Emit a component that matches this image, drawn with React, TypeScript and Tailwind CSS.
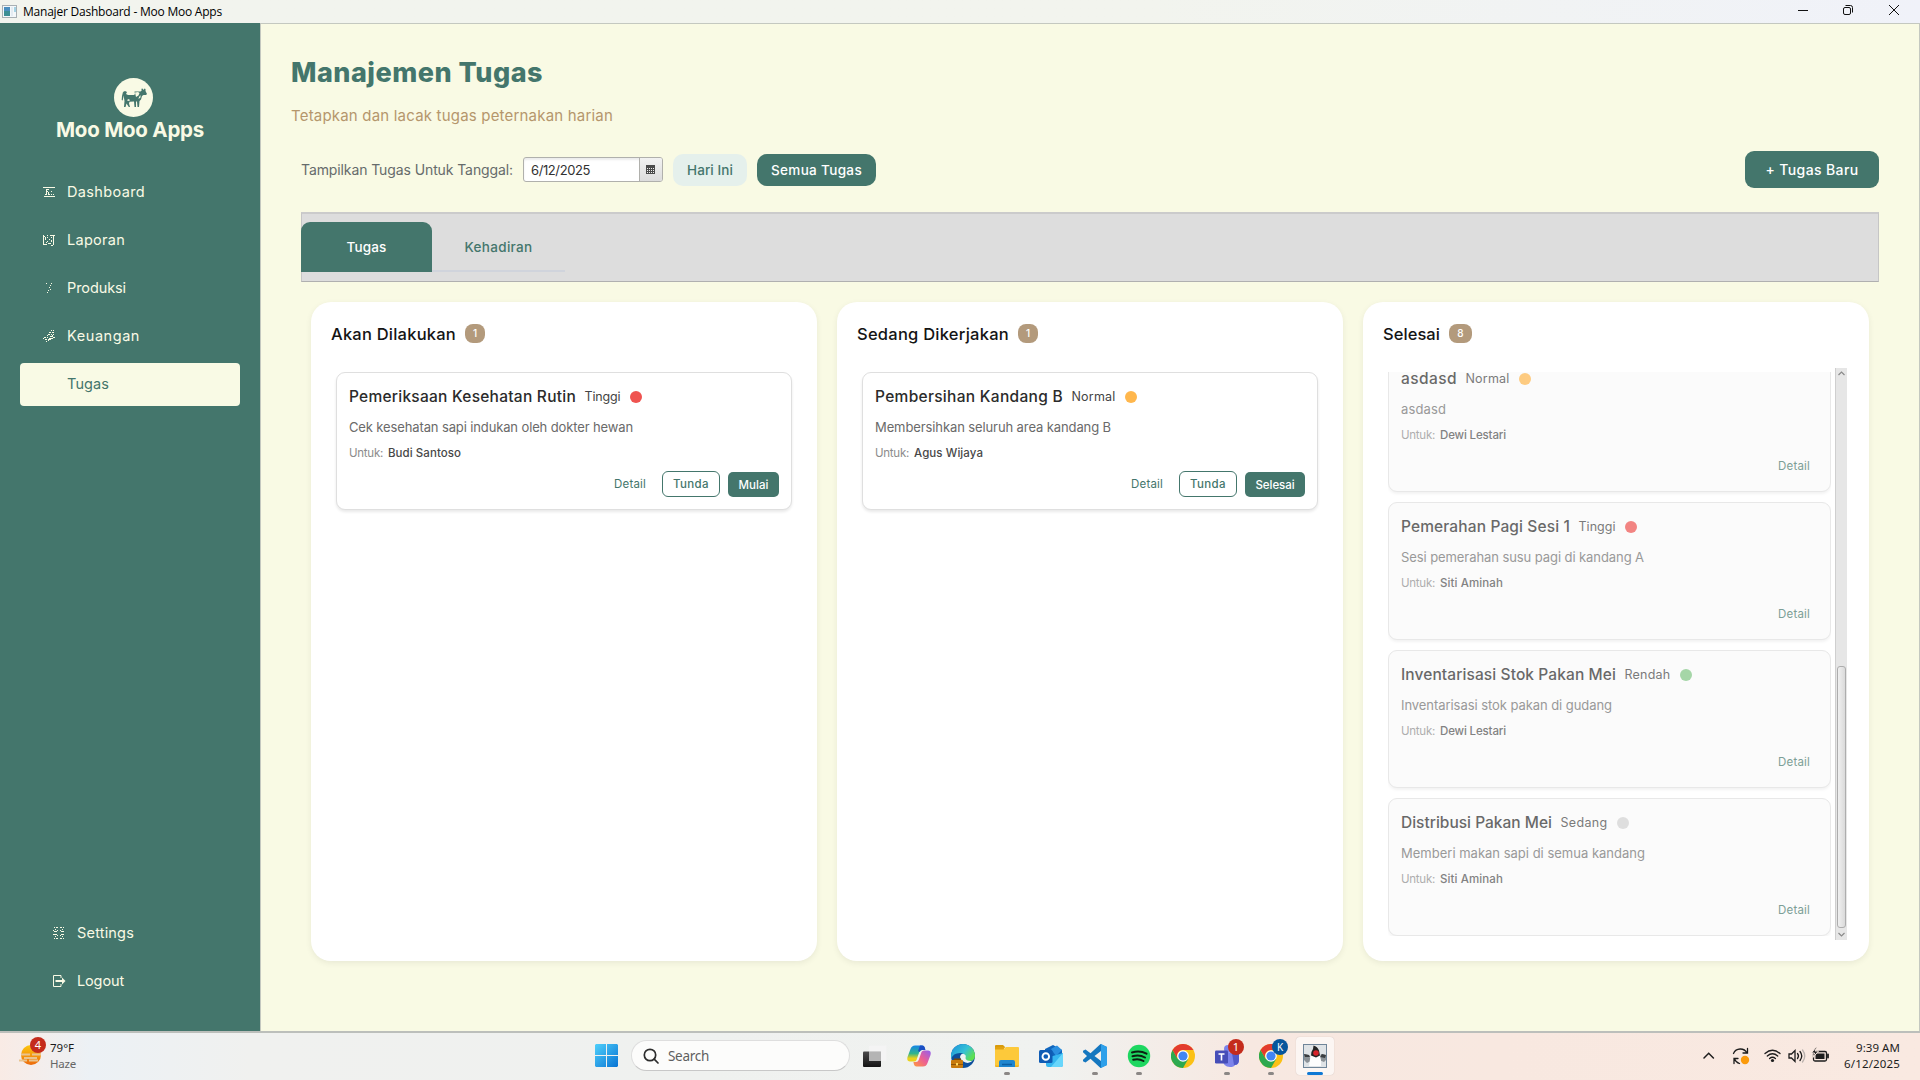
import { useLayoutEffect, useRef, useState, type ReactNode } from "react";

/* Single line of text whose tracking is adjusted so that it spans `w` pixels. */
function Line({ w, className = "", children }: { w: number; className?: string; children: string }) {
  const ref = useRef<HTMLSpanElement>(null);
  const [spacing, setSpacing] = useState(0);
  useLayoutEffect(() => {
    const range = document.createRange();
    range.selectNodeContents(ref.current!);
    const natural = range.getBoundingClientRect().width;
    setSpacing((w - natural) / children.length);
  }, [w, children]);
  return (
    <span
      ref={ref}
      className={"block shrink-0 whitespace-nowrap " + className}
      style={{ width: w, letterSpacing: spacing }}
    >
      {children}
    </span>
  );
}

function TitleBar() {
  return (
    <header className="flex h-[23px] shrink-0 items-center bg-gradient-to-r from-[#f2f4ee] from-60% to-[#f0f2f9] pl-[2px]">
      <svg width="16" height="16" viewBox="0 0 16 16">
        <rect x="0.5" y="1.5" width="14" height="12" fill="#f4f8fa" stroke="#a8b0b4" />
        <rect x="2" y="3" width="6" height="9" fill="#3c8f94" />
        <rect x="2" y="3" width="6" height="4" fill="#4a8fc0" />
        <rect x="9" y="3" width="2" height="9" fill="#e4ecf2" />
        <rect x="12" y="3" width="2" height="5" fill="#a6d3e4" />
      </svg>
      <Line w={199} className="ml-[5px] font-['Open_Sans',sans-serif] text-[12px] leading-none text-black">
        Manajer Dashboard - Moo Moo Apps
      </Line>
      <div className="mr-[2px] ml-auto flex h-full items-start">
        <svg width="46" height="20" viewBox="0 0 46 20" stroke="#111" fill="none">
          <path d="M18 10.5h10" />
        </svg>
        <svg width="46" height="20" viewBox="0 0 46 20" stroke="#111" fill="none">
          <rect x="17.500" y="7.500" width="7" height="7" rx="1.500" />
          <path d="M19.500 5.500h5q2 0 2 2v5" />
        </svg>
        <svg width="46" height="20" viewBox="0 0 46 20" stroke="#111" fill="none">
          <path d="M17 5l10 10M27 5l-10 10" />
        </svg>
      </div>
    </header>
  );
}

function CowLogo() {
  return (
    <svg width="39" height="39" viewBox="0 0 39 39" className="ml-[6px]">
      <circle cx="19.500" cy="19.500" r="19.500" fill="#f9fae5" />
      <g fill="#44766c">
        <path d="M9 14l2-1 2 1-1 2 2 1h6l1-1-.5-2.500h6l1.500-1.500-1-1 1.500-.5 1 1.500 1-1.500 1 .5v2l1.500 3-1 1h-2.500l-1.500 1-1 3.500-1.500 1.500-.5 6h-1.500l-.5-5.500h-1v5.500h-1.500l-.5-5.500-4.500.3-.5 1.700 1 3.500h-1.200l-2.300-3.500-1 3.500h-1.500l.5-6z" />
        <path d="M9 14l-1 4-.3 4 1 .5.800-4 1-2z" />
      </g>
      <path d="M21 14.500l3-.5 1.500 1-1 2.500-2.500 1.500zM25 19l1.500-2v2.500l-2 1.500zM13 22l2-1 1 1.500-2 .5z" fill="#f9fae5" />
    </svg>
  );
}

function PixelIcon({ d }: { d: string }) {
  return (
    <svg width="12" height="12" viewBox="0 0 12 12" className="shrink-0" fill="none" stroke="#f9fae5" shapeRendering="crispEdges">
      <path d={d} />
    </svg>
  );
}

const nav = [
  { label: "Dashboard", w: 78, d: "M0 1.500h12M1 10.500h11M3.500 3v6M4 3.500h2M4 5.500h1M5.500 6v2M2 8.500h1M5 8.500h2M8.500 5v1M8 8.500h1M10 8.500h1" },
  { label: "Laporan", w: 58, d: "M.5 1v10M1 10.500h3M1 2.500h1M2.500 3v3M4 3.500h1M4 1.500h1M4 7.500h1M3 8.500h1M5 9.500h3M8.500 6v2M7 1.500h5M10.500 2v9M8 11.500h2M8.500 3v1M6 5.500h1" },
  { label: "Produksi", w: 59, d: "M3 1.500h1M8 1.500h1M7 3.500h1M6 5.500h1M7 7.500h1M5 8.500h1M4 10.500h1" },
  { label: "Keuangan", w: 73, d: "M8 .5h1M10 .5h1M6 2.500h2M9 2.500h2M5 4.500h2M8 4.500h1M10 4.500h1M7 6.500h3M1 7.500h2M4 5.500h1M0 8.500h1M2 9.500h2M6 8.500h4M5 9.500h3M4 7.500h1M10 7.500h2M3 11.500h1M5 10.500h1M9 5.500h1" },
  { label: "Tugas", w: 42, d: "", active: true },
];

function Sidebar() {
  return (
    <aside className="flex w-[261px] shrink-0 flex-col border-r border-[#c4c8c0] bg-[#44766c] text-[#f9fae5]">
      <div className="flex flex-col items-center pt-[55px]">
        <CowLogo />
        <Line w={148} className="text-[20.500px] leading-[26px] font-bold">Moo Moo Apps</Line>
      </div>
      <nav className="mt-[28px] flex flex-col gap-[5px] px-5">
        {nav.map((n) => (
          <div
            key={n.label}
            className={
              "flex h-[43px] items-center gap-[12px] rounded-[4px] pb-[2px] pl-[23px] " +
              (n.active ? "bg-[#f9fae5] text-[#44766c]" : "text-[#f9fae5]")
            }
          >
            <PixelIcon d={n.d} />
            <Line w={n.w} className="text-[14.500px] leading-5">{n.label}</Line>
          </div>
        ))}
      </nav>
      <div className="mt-auto mb-[29px] flex flex-col gap-[5px] pl-[53px]">
        <div className="flex h-[43px] items-center gap-[12px]">
          <PixelIcon d="M1 .5h1M3 .5h2M7 .5h2M10 .5h1M.5 3v1M.5 7v1M2 2.500h1M4 3.500h1M7 3.500h1M9 2.500h1M1 4.500h3M8 4.500h3M1 7.500h3M8 7.500h3M4 8.500h1M7 8.500h1M2 9.500h1M9 9.500h1M1 11.500h1M3 11.500h2M7 11.500h2M10 11.500h1" />
          <Line w={57} className="text-[14.500px] leading-5">Settings</Line>
        </div>
        <div className="flex h-[43px] items-center gap-[12px]">
          <svg width="13" height="12" viewBox="0 0 13 12" className="-mr-px shrink-0" fill="none" stroke="#f9fae5">
            <path d="M8 3V.5H.5v11H8V9" />
            <path d="M2.500 6H9" strokeWidth="2" />
            <path d="M9 2.500L12.500 6 9 9.500z" fill="#f9fae5" stroke="none" />
          </svg>
          <Line w={47} className="text-[14.500px] leading-5">Logout</Line>
        </div>
      </div>
    </aside>
  );
}

function Toolbar() {
  return (
    <div className="mt-[23px] flex h-[37px] items-center">
      <Line w={212} className="text-[14px] leading-5 text-[#666b6b]">Tampilkan Tugas Untuk Tanggal:</Line>
      <div className="ml-[10px] flex h-[25px] w-[140px] overflow-hidden rounded-[3px] border border-[#b0b0ac] bg-white shadow-[inset_0_2px_2px_#ececec]">
        <div className="flex w-[115px] items-center pl-[7px]">
          <Line w={59} className="text-[13px] leading-5 text-[#323232]">6/12/2025</Line>
        </div>
        <div className="flex flex-1 items-center justify-center border-l border-[#b0b0ac] bg-gradient-to-b from-[#f2f2f2] to-[#dcdcdc]">
          <svg width="9" height="9" viewBox="0 0 9 9" className="-ml-px" shapeRendering="crispEdges">
            <rect width="9" height="9" fill="#4a4a4a" />
            <path d="M1 3.500h7M1 5.500h7M1 7.500h7" stroke="#eee" strokeDasharray="1 1" />
          </svg>
        </div>
      </div>
      <div className="ml-[10px] flex h-8 w-[74px] items-center justify-center rounded-[10px] bg-[#e5f0ec] text-[#44766c]">
        <Line w={46} className="text-[13.500px] leading-5 font-medium">Hari Ini</Line>
      </div>
      <div className="ml-[10px] flex h-8 w-[119px] items-center justify-center rounded-[10px] bg-[#44766c] text-white">
        <Line w={91} className="text-[13.500px] leading-5 font-medium">Semua Tugas</Line>
      </div>
      <div className="ml-auto flex h-[37px] w-[134px] items-center justify-center rounded-[9px] bg-[#44766c] text-white">
        <Line w={93} className="text-[14px] leading-5 font-medium">+ Tugas Baru</Line>
      </div>
    </div>
  );
}

function Tabs() {
  return (
    <div className="mt-6 flex h-[70px] items-start border-x border-t-2 border-b border-x-[#c6c6c6] border-t-[#cbcbcb] border-b-[#b0b0b0] bg-[#dddddd] pt-2">
      <div className="-ml-px flex h-[50px] w-[131px] items-center justify-center rounded-t-[9px] bg-[#44766c] text-white">
        <Line w={40} className="text-[13.500px] leading-5 font-medium">Tugas</Line>
      </div>
      <div className="flex h-[50px] w-[133px] items-center justify-center border-b-2 border-[#d0d4dc] pt-[2px] text-[#44766c]">
        <Line w={68} className="text-[13.500px] leading-5 font-medium">Kehadiran</Line>
      </div>
    </div>
  );
}

type Task = {
  title: string; tw: number; level: string; lw: number; dot: string;
  desc: string; dw: number; who: string; ww: number; action?: string; aw?: number;
};

function TaskCard({ t, done = false }: { t: Task; done?: boolean }) {
  return (
    <article
      className={
        "flex h-[138px] shrink-0 flex-col rounded-[9px] border px-3 pt-[12px] " +
        (done
          ? "border-[#e8e8e8] bg-[#fbfbfb] shadow-[0_2px_3px_rgba(0,0,0,0.05)]"
          : "border-[#dfdfdf] bg-white shadow-[0_2px_3px_rgba(0,0,0,0.09)]")
      }
    >
      <div className={"flex h-6 items-center " + (done ? "opacity-70" : "")}>
        <Line w={t.tw} className="text-[15.500px] leading-5 font-medium text-[#2b2b2b]">{t.title}</Line>
        <Line w={t.lw} className="ml-[8.500px] text-[12.500px] leading-5 text-[#444444]">{t.level}</Line>
        <span className="ml-[9px] size-3 rounded-full" style={{ backgroundColor: t.dot }} />
      </div>
      <Line w={t.dw} className={"mt-[7px] text-[13px] leading-[22px] " + (done ? "text-[#999999]" : "text-[#6a6a6a]")}>
        {t.desc}
      </Line>
      <div className="mt-[5px] flex h-5 items-center">
        <Line w={34} className={"text-[11.500px] leading-5 " + (done ? "text-[#aeaeae]" : "text-[#8c8c8c]")}>Untuk:</Line>
        <Line w={t.ww} className={"ml-[5px] text-[11.500px] leading-5 font-medium " + (done ? "text-[#828282]" : "text-[#484848]")}>
          {t.who}
        </Line>
      </div>
      <div className="mt-2 flex h-[26px] items-center justify-end">
        <Line w={32} className={"text-[11.500px] leading-5 " + (done ? "mr-2 text-[#7d9f97]" : "mr-4 text-[#44766c]")}>Detail</Line>
        {t.action && (
          <>
            <div className="flex h-[26px] w-[58px] items-center justify-center rounded-[6px] border border-[#44766c] text-[#44766c]">
              <Line w={36} className="text-[11.500px] leading-5 font-medium">Tunda</Line>
            </div>
            <div className="mt-px ml-2 flex h-[25px] items-center rounded-[5px] bg-[#44766c] px-[10.500px] text-white">
              <Line w={t.aw!} className="text-[11.500px] leading-5 font-medium">{t.action}</Line>
            </div>
          </>
        )}
      </div>
    </article>
  );
}

const doneTasks: Task[] = [
  { title: "asdasd", tw: 56, level: "Normal", lw: 44, dot: "#ffb74d", desc: "asdasd", dw: 45, who: "Dewi Lestari", ww: 66 },
  { title: "Pemerahan Pagi Sesi 1", tw: 169, level: "Tinggi", lw: 37, dot: "#ef5350", desc: "Sesi pemerahan susu pagi di kandang A", dw: 243, who: "Siti Aminah", ww: 63 },
  { title: "Inventarisasi Stok Pakan Mei", tw: 215, level: "Rendah", lw: 46, dot: "#81c784", desc: "Inventarisasi stok pakan di gudang", dw: 211, who: "Dewi Lestari", ww: 66 },
  { title: "Distribusi Pakan Mei", tw: 151, level: "Sedang", lw: 47, dot: "#d3d3d3", desc: "Memberi makan sapi di semua kandang", dw: 244, who: "Siti Aminah", ww: 63 },
];

function Column({ title, w, count, badge, children }: { title: string; w: number; count: string; badge: string; children: ReactNode }) {
  return (
    <section className="flex h-[659px] w-[506px] flex-col rounded-[20px] bg-white px-5 pt-5 shadow-[0_2px_6px_rgba(0,0,0,0.07)]">
      <div className="flex h-[23px] items-center">
        <Line w={w} className="text-[16.500px] leading-6 font-medium text-[#141414]">{title}</Line>
        <span className={"ml-[9px] flex h-[19px] items-center justify-center rounded-[8px] bg-[#b39a7c] text-[10px] font-medium text-white " + badge}>
          {count}
        </span>
      </div>
      {children}
    </section>
  );
}

function Board() {
  return (
    <div className="mx-[10px] mt-5 flex gap-5">
      <Column title="Akan Dilakukan" w={125} count="1" badge="w-5">
        <div className="mt-[27px] px-[5px]">
          <TaskCard t={{ title: "Pemeriksaan Kesehatan Rutin", tw: 227, level: "Tinggi", lw: 36, dot: "#ef5350", desc: "Cek kesehatan sapi indukan oleh dokter hewan", dw: 284, who: "Budi Santoso", ww: 73, action: "Mulai", aw: 30 }} />
        </div>
      </Column>
      <Column title="Sedang Dikerjakan" w={152} count="1" badge="w-5">
        <div className="mt-[27px] px-[5px]">
          <TaskCard t={{ title: "Pembersihan Kandang B", tw: 188, level: "Normal", lw: 44, dot: "#ffb74d", desc: "Membersihkan seluruh area kandang B", dw: 236, who: "Agus Wijaya", ww: 69, action: "Selesai", aw: 39 }} />
        </div>
      </Column>
      <Column title="Selesai" w={57} count="8" badge="w-[23px]">
        <div className="mt-[23px] flex h-[572px] pl-[5px]">
          <div className="my-1 flex h-[564px] w-[443px] flex-col justify-end gap-[10px] overflow-hidden">
            {doneTasks.map((t, i) => (
              <TaskCard key={i} t={t} done />
            ))}
          </div>
          <div className="ml-[4px] flex h-full w-3 flex-col items-center border-l border-[#cfcfcf] bg-[#e6e6e6]">
            <svg width="9" height="10" viewBox="0 0 9 10" fill="none" stroke="#8a8a8a" strokeWidth="1.200">
              <path d="M1.500 7l3-3 3 3" />
            </svg>
            <div className="mt-auto h-[262px] w-[9px] rounded-[3px] border border-[#adadad] bg-gradient-to-r from-[#f0f0f0] to-[#dadada]" />
            <svg width="9" height="12" viewBox="0 0 9 12" fill="none" stroke="#8a8a8a" strokeWidth="1.200">
              <path d="M1.500 5l3 3 3-3" />
            </svg>
          </div>
        </div>
      </Column>
    </div>
  );
}

function Chrome() {
  return (
    <svg width="24" height="24" viewBox="0 0 24 24">
      <circle cx="12" cy="12" r="12" fill="#fbc116" />
      <path d="M1.600 6A12 12 0 0 0 12 24l5.200-9L12 12 6.800 15z" fill="#2da94f" />
      <path d="M1.600 6A12 12 0 0 1 22.400 6H12a6 6 0 0 0-5.200 9z" fill="#e33b2e" />
      <circle cx="12" cy="12" r="5.800" fill="#fff" />
      <circle cx="12" cy="12" r="4.600" fill="#4285f4" />
    </svg>
  );
}

function AppSlot({ children, running = false, active = false, badge }: { children: ReactNode; running?: boolean; active?: boolean; badge?: ReactNode }) {
  return (
    <div className="flex w-11 justify-center">
      <div
        className={
          "relative flex h-[38px] w-[38px] flex-col items-center rounded-[4px] pt-[7px] " +
          (active ? "bg-white/60 shadow-[0_0_1px_rgba(0,0,0,0.25)]" : "")
        }
      >
        {children}
        {badge}
        {running && <span className="mt-[4px] h-[3px] w-[6px] rounded-full bg-[#8b8785]" />}
        {active && <span className="mt-[4px] h-[3px] w-4 shrink-0 rounded-full bg-[#0f78d4]" />}
      </div>
    </div>
  );
}

function Taskbar() {
  return (
    <footer className="flex h-[49px] shrink-0 items-center border-t-2 border-[#bcbfbb] bg-[linear-gradient(90deg,#f9ebe5_0px,#ecf1f5_90px,#f0f1ef_250px,#eff1ef_700px,#f0f2f0_1050px,#f7e8e1_1250px,#f8e8e0_1500px,#f9e9e1_1920px)] pb-[2px] font-['Noto_Sans',sans-serif]">
      <div className="relative ml-[19px] h-[38px] w-[27px]">
        <svg width="22" height="24" viewBox="0 0 22 24" className="mt-[6px]">
          <defs>
            <linearGradient id="sun" x1="0" y1="0" x2="0" y2="1">
              <stop offset="0" stopColor="#fdc80f" />
              <stop offset="1" stopColor="#ec6a0c" />
            </linearGradient>
          </defs>
          <circle cx="12" cy="12" r="10" fill="url(#sun)" />
          <path d="M2 11.500h9M13 11.500h9M5 15h13M0 17.500h8M10 17.500h9" stroke="#e9c48f" strokeWidth="1.800" />
        </svg>
        <span className="absolute top-0 left-[11px] flex size-4 items-center justify-center rounded-full bg-[#c42b1c] text-[11px] leading-none text-white">4</span>
      </div>
      <div className="ml-[4px] pt-[1px] text-[11.500px] leading-4 text-[#1a1a1a]">
        <Line w={24}>79°F</Line>
        <Line w={26} className="text-[#666666]">Haze</Line>
      </div>
      <svg width="23" height="23" viewBox="0 0 23 23" className="ml-[519px] shrink-0">
        <defs>
          <linearGradient id="win" x1="0" y1="0" x2="1" y2="1">
            <stop offset="0" stopColor="#4fd0fb" />
            <stop offset="1" stopColor="#0873d3" />
          </linearGradient>
        </defs>
        <path d="M1 0h10v11H0V1zM12 0h10l1 1v10H12zM0 12h11v11H1l-1-1zM12 12h11v10l-1 1H12z" fill="url(#win)" />
      </svg>
      <div className="ml-[13px] flex h-[31px] w-[219px] shrink-0 items-center rounded-full border border-b-[#c8c8c8] border-[#dedede] bg-[#fcfcfb] pl-[11px]">
        <svg width="16" height="16" viewBox="0 0 16 16" fill="none" stroke="#2d2d2d" strokeWidth="1.700" strokeLinecap="round">
          <circle cx="7" cy="7" r="5.700" />
          <path d="M11.200 11.200L15 15" />
        </svg>
        <Line w={41} className="ml-[9px] text-[13.500px] leading-5 text-[#5f5f5f]">Search</Line>
      </div>
      <div className="ml-[3px] flex">
        <AppSlot>
          <svg width="24" height="24" viewBox="0 0 24 24">
            <defs>
              <linearGradient id="tv" x1="0" y1="0" x2="0" y2="1">
                <stop offset="0" stopColor="#4a4a4a" />
                <stop offset="1" stopColor="#141414" />
              </linearGradient>
            </defs>
            <rect x="0" y="7.500" width="18" height="15.500" rx="1" fill="url(#tv)" />
            <rect x="6" y="1.500" width="17.500" height="15.500" rx="1" fill="#f4f4f4" fillOpacity="0.850" />
            <path d="M6 7.500h12V17H6z" fill="#b4b4b4" />
          </svg>
        </AppSlot>
        <AppSlot>
          <svg width="24" height="24" viewBox="0 0 24 24">
            <defs>
              <linearGradient id="cpA" x1="0" y1="0" x2="0" y2="1">
                <stop offset="0" stopColor="#1485e8" />
                <stop offset="0.500" stopColor="#30b48c" />
                <stop offset="0.800" stopColor="#e9d21c" />
              </linearGradient>
              <linearGradient id="cpB" x1="1" y1="0" x2="0" y2="1">
                <stop offset="0" stopColor="#8f5ff0" />
                <stop offset="0.500" stopColor="#ec5f95" />
                <stop offset="1" stopColor="#ff9a3c" />
              </linearGradient>
            </defs>
            <path d="M8 1.500h7q2 0 2.500 2L18 6h-3q-2 0-2.700 2L9.500 16q-.6 1.500-2.500 1.500H3q-3.500 0-2.500-4.500L3.500 5Q4.700 1.500 8 1.500z" fill="url(#cpA)" />
            <path d="M13 1.500h2.500q1.800 0 2.300 2L18.500 6H15q-1.500 0-2.300 2L11 7z" fill="#1b4fc4" />
            <path d="M16 22.500H9.500q-2 0-2.500-2l-.6-2.500H9q2 0 2.700-2L14.500 8q.6-1.500 2.500-1.500h4q3.500 0 2.500 4.500l-3 8q-1.200 3.500-4.500 3.500z" fill="url(#cpB)" />
          </svg>
        </AppSlot>
        <AppSlot>
          <svg width="24" height="24" viewBox="0 0 24 24">
            <defs>
              <linearGradient id="edge" x1="0" y1="0" x2="1" y2="0.600">
                <stop offset="0" stopColor="#1a8fdc" />
                <stop offset="0.600" stopColor="#35c1d6" />
                <stop offset="1" stopColor="#5ee04f" />
              </linearGradient>
            </defs>
            <circle cx="12" cy="12" r="12" fill="#0d4f9c" />
            <path d="M0 12A12 12 0 0 1 24 12q0 5-6 5-5 0-4-3 .5-5-5-5Q2 9 0 15z" fill="url(#edge)" />
            <path d="M9 13q1-4 4-3 2.500 1 1.500 4 0 3 6 3l2-1q-4 4-8 2.500Q10 17 9 13z" fill="#eef3f3" />
            <path d="M3 14.500h7v2H3z" fill="#7a4a05" />
            <rect x="0" y="16" width="12" height="8" rx="1" fill="#c87a0c" />
            <path d="M0 20.500h12" stroke="#8f5505" />
            <rect x="5" y="19" width="2" height="2.500" fill="#ffd75e" />
          </svg>
        </AppSlot>
        <AppSlot running>
          <svg width="24" height="24" viewBox="0 0 24 24">
            <path d="M0 2q0-1 1-1h7l2.500 2.500H0z" fill="#d99b0b" />
            <path d="M0 5h9l2-2h12q1 0 1 1v18H0z" fill="#fdc93a" />
            <path d="M0 3h10L8.500 5.500H0z" fill="#e2a20e" />
            <path d="M4 23v-5q0-2 2-2h12q2 0 2 2v5z" fill="#1f86cf" />
            <path d="M7 20.500h10" stroke="#0b5fa3" strokeWidth="1.500" />
            <path d="M0 21.500h4V23H1q-1 0-1-1zM20 21.500h4q0 1.500-1 1.500h-3z" fill="#f3b21c" />
          </svg>
        </AppSlot>
        <AppSlot>
          <svg width="24" height="24" viewBox="0 0 24 24">
            <path d="M6 5l8-4 9 5v8l-9 6-8-4z" fill="#1066bd" />
            <path d="M12 5l6-3.500L23 6l-6 6z" fill="#2b8fe0" />
            <path d="M7 14l17-5v12q0 2-2 2H9q-2 0-2-2z" fill="#35b6f0" />
            <path d="M24 9v12q0 2-2 2H12z" fill="#68d6fb" />
            <rect x="0" y="6" width="13.500" height="13" rx="1.500" fill="#0f5cb5" />
            <circle cx="6.800" cy="12.500" r="3.300" fill="none" stroke="#fff" strokeWidth="1.900" />
          </svg>
        </AppSlot>
        <AppSlot running>
          <svg width="24" height="24" viewBox="0 0 24 24">
            <path
              fillRule="evenodd"
              d="M17.500 0L24 3v18l-6.500 3L7.500 14.700 2.500 18.500 0 17.200v-1.400L4 12 0 8.200V6.800l2.500-1.300 5 3.800zM18 7l-6.500 5L18 17z"
              fill="#1577bf"
            />
            <path d="M18 0l6 3v18l-6 3z" fill="#2ea0ea" />
          </svg>
        </AppSlot>
        <AppSlot running>
          <svg width="24" height="24" viewBox="0 0 24 24">
            <circle cx="12" cy="12" r="11.200" fill="#1ed760" />
            <path d="M5 8.500q8-2.300 14.500 1.200M5.500 12.300q7-1.900 12.500 1.200M6.200 15.800q5.500-1.500 10.300 1.200" fill="none" stroke="#0c1f12" strokeWidth="2" strokeLinecap="round" />
          </svg>
        </AppSlot>
        <AppSlot>
          <Chrome />
        </AppSlot>
        <AppSlot
          running
          badge={<span className="absolute top-[2px] left-[20px] flex size-4 items-center justify-center rounded-full bg-[#c42b1c] text-[11px] leading-none text-white">1</span>}
        >
          <svg width="24" height="24" viewBox="0 0 24 24">
            <circle cx="13" cy="5" r="4" fill="#7b83eb" />
            <path d="M8 9h15q1 0 1 1v6q0 5-4 5-1 2-5 2-7 0-7-7z" fill="#7b83eb" />
            <path d="M17 9h6q1 0 1 1v6q0 5-5 5z" fill="#5059c9" />
            <rect x="0" y="6.500" width="13" height="13" rx="1.300" fill="#464eb8" />
            <path d="M3.500 10h6M6.500 10v6.500" stroke="#fff" strokeWidth="1.600" />
          </svg>
        </AppSlot>
        <AppSlot
          running
          badge={<span className="absolute top-[2px] left-[20px] flex size-4 items-center justify-center rounded-full bg-[#07569c] text-[10px] leading-none text-white">K</span>}
        >
          <Chrome />
        </AppSlot>
        <AppSlot active>
          <svg width="24" height="24" viewBox="0 0 24 24">
            <rect x="0.500" y="0.500" width="23" height="23" fill="#dfe3e6" stroke="#6f8599" />
            <path d="M1 10l5 1 2 6-4 2-3-3zM23 11l-5-1-2 6 5 2 2-2z" fill="#8b9196" />
            <path d="M1 10l5 1 1 2-5 0zM23 11l-4-1-2 3 5 1z" fill="#3a3d40" />
            <path d="M8.500 10q-2 6-2.500 12h12q.500-7-1.500-12z" fill="#fdfdfd" />
            <path d="M10.500 1.500q4 1 5.500 5l1 5-4 2-5-2q0-4 2-6.500z" fill="#242424" />
            <circle cx="13" cy="9" r="2.800" fill="#d8232a" />
          </svg>
        </AppSlot>
      </div>
      <div className="mr-5 ml-auto flex items-center">
        <svg width="126" height="24" viewBox="0 0 126 24" fill="none" stroke="#1d1d1d" strokeWidth="1.300" strokeLinecap="round">
          <path d="M1 14l4.700-4.700L10.400 14" strokeWidth="1.500" />
          <path d="M30.500 9.500a7.500 7.500 0 0 1 13.500-.5M44.500 4.500V9H40M31 19.500v-5h4M31.500 15q1.500 3.500 5 4.500" />
          <circle cx="42" cy="16" r="4.200" fill="#fb9a0a" stroke="none" />
          <path d="M62 9.500q7.500-6.500 15 0M64.300 12q5.200-4.500 10.400 0M66.600 14.500q2.900-2.500 5.800 0" />
          <circle cx="69.500" cy="16.500" r="1.600" fill="#1d1d1d" stroke="none" />
          <path d="M86 10h2.500L92 6.500v11L88.500 14H86zM94.500 9.500q2 2.500 0 5M97 7.500q3.500 4.500 0 9" />
          <path d="M99.500 6q4.500 6 0 12" stroke="#b9b1ad" />
          <rect x="110.500" y="7.500" width="13" height="9.500" rx="1.500" />
          <rect x="112.500" y="9.500" width="9" height="5.500" fill="#1d1d1d" stroke="none" />
          <path d="M125 10.500v3" strokeWidth="1.800" />
          <path d="M113 3l-4.500 6h3l-1.500 4.500 5.500-6.500h-3.500l2-4z" fill="#1d1d1d" stroke="#f9e9e1" strokeWidth="1" />
        </svg>
        <div className="ml-[15px] flex w-[56px] flex-col items-end pt-[1px] text-[11.500px] leading-4 text-[#1d1d1d]">
          <Line w={44}>9:39 AM</Line>
          <Line w={56}>6/12/2025</Line>
        </div>
      </div>
    </footer>
  );
}

export default function App() {
  return (
    <div className="flex h-[1080px] w-[1920px] flex-col overflow-hidden bg-[#f9fae4] font-['Inter',sans-serif]">
      <TitleBar />
      <div className="flex min-h-0 flex-1">
        <Sidebar />
        <main className="flex-1 border-t border-r border-[#c4c8c0] pr-[40px] pl-[40px]">
          <Line w={252} className="-ml-[10px] mt-[31px] text-[27px] leading-9 font-extrabold text-[#44766c]">Manajemen Tugas</Line>
          <Line w={322} className="-ml-[10px] mt-[13px] text-[15px] leading-6 text-[#b5966c]">
            Tetapkan dan lacak tugas peternakan harian
          </Line>
          <Toolbar />
          <Tabs />
          <Board />
        </main>
      </div>
      <Taskbar />
    </div>
  );
}
